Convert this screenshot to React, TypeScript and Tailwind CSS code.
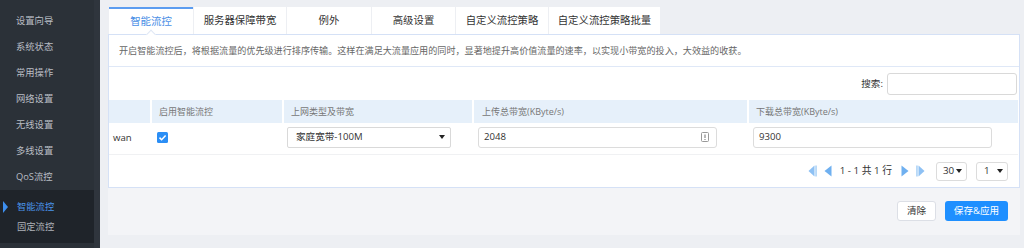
import React from "react";

const FONT = { fontFamily: "'Open Sans','Noto Sans CJK SC',sans-serif" };

const menu = ["设置向导", "系统状态", "常用操作", "网络设置", "无线设置", "多线设置", "QoS流控"];
const tabs: { label: string; w: string }[] = [
  { label: "智能流控", w: "w-[84px]" },
  { label: "服务器保障带宽", w: "w-[92px]" },
  { label: "例外", w: "w-[84px]" },
  { label: "高级设置", w: "w-[83px]" },
  { label: "自定义流控策略", w: "w-[92px]" },
  { label: "自定义流控策略批量", w: "w-[111px]" },
];

function Caret() {
  return (
    <svg width="6" height="4" viewBox="0 0 6 4">
      <polygon points="0,0 6,0 3,4" fill="#222" />
    </svg>
  );
}

function FirstIcon() {
  return (
    <svg width="9" height="12" viewBox="0 0 9 12">
      <polygon points="6.5,0.5 0.5,6 6.5,11.5" fill="#8ec1f4" />
      <rect x="7.3" y="0.5" width="1.5" height="11" fill="#a9d0f6" />
    </svg>
  );
}
function PrevIcon() {
  return (
    <svg width="8" height="12" viewBox="0 0 8 12">
      <polygon points="7.5,0.5 0.5,6 7.5,11.5" fill="#6fb0f0" />
    </svg>
  );
}
function NextIcon() {
  return (
    <svg width="8" height="12" viewBox="0 0 8 12">
      <polygon points="0.5,0.5 7.5,6 0.5,11.5" fill="#6fb0f0" />
    </svg>
  );
}
function LastIcon() {
  return (
    <svg width="9" height="12" viewBox="0 0 9 12">
      <rect x="0.2" y="0.5" width="1.5" height="11" fill="#a9d0f6" />
      <polygon points="2.5,0.5 8.5,6 2.5,11.5" fill="#8ec1f4" />
    </svg>
  );
}

export default function App() {
  return (
    <div className="flex w-[1024px] h-[248px] overflow-hidden bg-[#edeff3]" style={FONT}>
      {/* Sidebar */}
      <aside className="w-[100px] shrink-0 h-full bg-[#2b3138] flex">
        <div className="w-[94px] pt-[8px]">
          {menu.map((m) => (
            <div key={m} className="h-[26px] flex items-center pl-[16px] text-[9.3px] leading-none text-[#b9bdc4]">
              {m}
            </div>
          ))}
          <div className="bg-[#1f242a] pt-[7px] pb-[6px] relative">
            <div className="h-[20px] flex items-center pl-[17px] text-[9.3px] leading-none text-[#4a94ea] relative">
              <span className="absolute left-[3px] top-[4px] w-0 h-0 border-y-[6px] border-y-transparent border-l-[5px] border-l-[#3d8ff0]" />
              智能流控
            </div>
            <div className="h-[20px] flex items-center pl-[17px] text-[9.3px] leading-none text-[#aeb2b9]">固定流控</div>
          </div>
        </div>
        <div className="flex-1 bg-[#2f353d]" />
      </aside>

      {/* Main */}
      <main className="flex-1 pl-[8px] pr-[4px] pt-[7px] flex flex-col">
        {/* Tabs */}
        <div className="flex gap-[1px] ml-[1px] h-[27px]">
          {tabs.map((t, i) => (
            <div
              key={t.label}
              className={
                "relative bg-white flex items-center justify-center text-[10.4px] leading-none " +
                t.w +
                (i === 0 ? " border-t-[2px] border-t-[#5b9cf0] text-[#4a8fe6]" : " text-[#333]")
              }
            >
              {t.label}
              {i === 0 && (
                <span className="absolute left-1/2 -translate-x-1/2 bottom-[-4px] w-[7px] h-[7px] rotate-45 bg-white border-l border-t border-[#dfe7f5]" />
              )}
            </div>
          ))}
        </div>

        {/* Outer container */}
        <div className="bg-[#f3f4f7] h-[201px] flex flex-col">
          {/* Panel */}
          <div className="bg-white border border-[#d5e1f6] flex flex-col">
            <div className="h-[32px] border-b border-[#dfe8f7] flex items-center pl-[10px] text-[9.1px] leading-none text-[#666]">
              开启智能流控后，将根据流量的优先级进行排序传输。这样在满足大流量应用的同时，显著地提升高价值流量的速率，以实现小带宽的投入，大效益的收获。
            </div>
            <div className="h-[33px] flex items-start justify-end pt-[6px] pr-[2px]">
              <span className="text-[9.6px] leading-none text-[#333] mt-[6px] mr-[4px]">搜索:</span>
              <div className="w-[130px] h-[22px] border border-[#d9d9d9] rounded-[3px] bg-white" />
            </div>
            <div className="pr-[1px]">
              <div className="grid grid-cols-[41px_130px_188px_273px_1fr] gap-x-[2px] h-[23px]">
                <div className="bg-[#e6f0fa]" />
                <div className="bg-[#e6f0fa] flex items-center pl-[7px] text-[9px] leading-none text-[#777]">启用智能流控</div>
                <div className="bg-[#e6f0fa] flex items-center pl-[7px] text-[9px] leading-none text-[#777]">上网类型及带宽</div>
                <div className="bg-[#e6f0fa] flex items-center pl-[8px] text-[9px] leading-none text-[#777]">上传总带宽(KByte/s)</div>
                <div className="bg-[#e6f0fa] flex items-center pl-[7px] text-[9px] leading-none text-[#777]">下载总带宽(KByte/s)</div>
              </div>
              <div className="grid grid-cols-[41px_130px_188px_273px_1fr] gap-x-[2px] h-[32px] border-b border-[#f0f1f3]">
                <div className="flex items-center pl-[4px] text-[9.6px] leading-none text-[#333] pb-[2px]">wan</div>
                <div className="flex items-center pl-[5px] pb-[3px]">
                  <svg width="11" height="11" viewBox="0 0 11 11">
                    <rect x="0" y="0" width="11" height="11" rx="1.5" fill="#2b8ef5" />
                    <polyline points="2.5,5.6 4.6,7.7 8.6,3.4" fill="none" stroke="#fff" strokeWidth="1.5" />
                  </svg>
                </div>
                <div className="flex items-center pl-[3px] pb-[3px]">
                  <div className="w-[164px] h-[21px] border border-[#d9d9d9] rounded-[2px] flex items-center justify-between pl-[8px] pr-[5px] text-[9.6px] leading-none text-[#333]">
                    <span>家庭宽带-100M</span>
                    <Caret />
                  </div>
                </div>
                <div className="flex items-center pl-[4px] pb-[3px]">
                  <div className="w-[239px] h-[21px] border border-[#dcdcdc] rounded-[3px] flex items-center justify-between pl-[5px] pr-[7px] text-[9.6px] leading-none text-[#333]">
                    <span>2048</span>
                    <svg width="8" height="10" viewBox="0 0 8 10">
                      <rect x="0.5" y="0.5" width="7" height="9" rx="1" fill="none" stroke="#999" />
                      <rect x="3.3" y="2.5" width="1.4" height="3.5" fill="#999" />
                      <rect x="3.3" y="7" width="1.4" height="1" fill="#999" />
                    </svg>
                  </div>
                </div>
                <div className="flex items-center pl-[4px] pb-[3px]">
                  <div className="w-[239px] h-[21px] border border-[#dcdcdc] rounded-[3px] flex items-center pl-[5px] text-[9.6px] leading-none text-[#333]">
                    9300
                  </div>
                </div>
              </div>
            </div>
            <div className="h-[32px] flex items-center justify-end pr-[11px] text-[9.8px] leading-none text-[#333]">
              <div className="flex items-center gap-[7px]">
                <FirstIcon />
                <PrevIcon />
              </div>
              <span className="ml-[8px] mr-[9px]">1 - 1 共 1 行</span>
              <div className="flex items-center gap-[7px]">
                <NextIcon />
                <LastIcon />
              </div>
              <div className="ml-[11px] w-[31px] h-[19px] border border-[#dcdcdc] rounded-[3px] flex items-center justify-between pl-[6px] pr-[4px]">
                <span>30</span>
                <Caret />
              </div>
              <div className="ml-[9px] w-[32px] h-[19px] border border-[#dcdcdc] rounded-[3px] flex items-center justify-between pl-[7px] pr-[4px]">
                <span>1</span>
                <Caret />
              </div>
            </div>
          </div>
          {/* Buttons */}
          <div className="flex justify-end items-center gap-[9px] pt-[13px] pr-[12px]">
            <div className="w-[39px] h-[20px] bg-white border border-[#dcdfe6] rounded-[3px] flex items-center justify-center text-[9.6px] leading-none text-[#333]">
              清除
            </div>
            <div className="w-[63px] h-[20px] bg-[#1e8fff] rounded-[3px] flex items-center justify-center text-[9.6px] leading-none text-white">
              保存&amp;应用
            </div>
          </div>
        </div>
      </main>
    </div>
  );
}
